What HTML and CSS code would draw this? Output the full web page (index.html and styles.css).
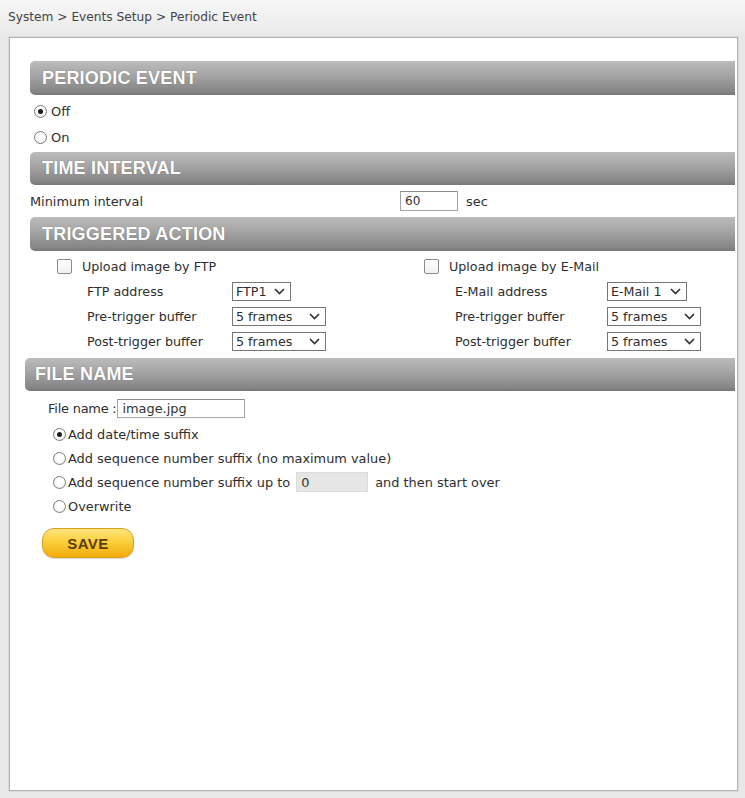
FILE: index.html
```html
<!DOCTYPE html>
<html>
<head>
<meta charset="utf-8">
<title>Periodic Event</title>
<link rel="stylesheet" href="styles.css">
</head>
<body>
<div class="topbar">System &gt; Events Setup &gt; Periodic Event</div>
<div class="panel">
  <div class="bar">PERIODIC EVENT</div>
  <div class="opts">
    <div class="opt"><span class="radio radio-on"></span>Off</div>
    <div class="opt"><span class="radio"></span>On</div>
  </div>

  <div class="bar bar-short">TIME INTERVAL</div>
  <div class="interval">
    <span class="interval-label">Minimum interval</span>
    <span class="field field-num">60</span>
    <span class="unit">sec</span>
  </div>

  <div class="bar">TRIGGERED ACTION</div>
  <div class="actions">
    <div class="action">
      <div class="check-row"><span class="check"></span>Upload image by FTP</div>
      <div class="sub"><span class="sub-label">FTP address</span><span class="select select-ftp">FTP1<svg class="chev" viewBox="0 0 11 7"><polyline points="1,1 5.5,5.5 10,1"/></svg></span></div>
      <div class="sub"><span class="sub-label">Pre-trigger buffer</span><span class="select select-frames">5 frames<svg class="chev" viewBox="0 0 11 7"><polyline points="1,1 5.5,5.5 10,1"/></svg></span></div>
      <div class="sub"><span class="sub-label">Post-trigger buffer</span><span class="select select-frames">5 frames<svg class="chev" viewBox="0 0 11 7"><polyline points="1,1 5.5,5.5 10,1"/></svg></span></div>
    </div>
    <div class="action action-mail">
      <div class="check-row"><span class="check"></span>Upload image by E-Mail</div>
      <div class="sub"><span class="sub-label">E-Mail address</span><span class="select select-mail">E-Mail 1<svg class="chev" viewBox="0 0 11 7"><polyline points="1,1 5.5,5.5 10,1"/></svg></span></div>
      <div class="sub"><span class="sub-label">Pre-trigger buffer</span><span class="select select-frames">5 frames<svg class="chev" viewBox="0 0 11 7"><polyline points="1,1 5.5,5.5 10,1"/></svg></span></div>
      <div class="sub"><span class="sub-label">Post-trigger buffer</span><span class="select select-frames">5 frames<svg class="chev" viewBox="0 0 11 7"><polyline points="1,1 5.5,5.5 10,1"/></svg></span></div>
    </div>
  </div>

  <div class="bar bar-file">FILE NAME</div>
  <div class="file">
    <div class="file-row">File name :<span class="field field-name">image.jpg</span></div>
    <div class="suffixes">
      <div class="suffix"><span class="radio radio-on"></span>Add date/time suffix</div>
      <div class="suffix"><span class="radio"></span>Add sequence number suffix (no maximum value)</div>
      <div class="suffix"><span class="radio"></span>Add sequence number suffix up to<span class="field field-seq">0</span>and then start over</div>
      <div class="suffix"><span class="radio"></span>Overwrite</div>
    </div>
    <button class="save">SAVE</button>
  </div>
</div>
</body>
</html>
```

FILE: styles.css
```css
* { box-sizing: border-box; }

html, body {
  margin: 0;
  height: 798px;
  overflow: hidden;
}

body {
  background: #e8e8e8;
  font-family: "DejaVu Sans", Verdana, sans-serif;
  color: #2e2e2e;
}

.topbar {
  height: 37px;
  padding: 10px 0 0 8px;
  background: linear-gradient(#f7f7f7, #e9e9e9);
  font-size: 12.2px;
  color: #444;
}

.panel {
  margin: 0 7px 0 9px;
  height: 754px;
  background: #fff;
  border: 1px solid #b3b3b3;
  box-shadow: 0 0 0 1px #d9d9d9;
  padding: 23px 2px 0 20px;
}

.bar {
  height: 34px;
  display: flex;
  align-items: center;
  padding-left: 12px;
  border-radius: 5px 0 0 5px;
  background: linear-gradient(#bcbcbc 0%, #a3a3a3 45%, #858585 90%, #777 100%);
  color: #fff;
  font-family: "Liberation Sans", Arial, sans-serif;
  font-weight: bold;
  font-size: 18px;
  letter-spacing: 0.2px;
  text-shadow: 0 0 1px rgba(0, 0, 0, 0.35);
}

.bar-short { height: 33px; }

.bar-file {
  height: 33px;
  margin-left: -5px;
  padding-left: 10px;
}

/* radios & checks */
.radio {
  width: 13px;
  height: 13px;
  flex: none;
  border: 1px solid #7c7c7c;
  border-radius: 50%;
  background: radial-gradient(circle at 50% 40%, #fff 40%, #e6e6e6 100%);
  display: inline-flex;
  align-items: center;
  justify-content: center;
}

.radio-on::after {
  content: "";
  width: 5px;
  height: 5px;
  border-radius: 50%;
  background: #1c1c1c;
}

.check {
  width: 15px;
  height: 15px;
  flex: none;
  border: 1px solid #8a8a8a;
  border-radius: 2px;
  background: linear-gradient(#fff, #f1f1f1);
}

/* periodic event */
.opts {
  padding: 3px 0 2px 4px;
}

.opt {
  height: 26px;
  display: flex;
  align-items: center;
  gap: 4px;
  font-size: 13px;
}

/* time interval */
.interval {
  height: 32px;
  display: flex;
  align-items: center;
  font-size: 12.9px;
}

.interval-label { width: 370px; }

.field {
  display: inline-flex;
  align-items: center;
  flex: none;
  padding-left: 4px;
  border: 1px solid #a4a4a4;
  border-top-color: #8c8c8c;
  background: #fff;
  color: #333;
}

.field-num {
  width: 58px;
  height: 20px;
  font-size: 12px;
}

.unit { margin-left: 8px; }

/* triggered action */
.actions {
  display: flex;
  padding: 3px 0 4px 27px;
  font-size: 12.7px;
}

.action {
  width: 367px;
  flex: none;
}

.action-mail { width: 300px; }

.check-row {
  height: 25px;
  display: flex;
  align-items: center;
  gap: 10px;
}

.sub {
  height: 25px;
  display: flex;
  align-items: center;
  padding-left: 30px;
}

.sub-label { width: 145px; flex: none; }

.action-mail .sub { padding-left: 31px; }
.action-mail .sub-label { width: 152px; }

.select {
  height: 19px;
  flex: none;
  display: inline-flex;
  align-items: center;
  justify-content: space-between;
  padding: 0 5px 0 3px;
  border: 1px solid #767676;
  background: #fff;
}

.select-ftp { width: 59px; }
.select-frames { width: 94px; }
.select-mail { width: 80px; }

.chev {
  width: 11px;
  height: 7px;
  fill: none;
  stroke: #333;
  stroke-width: 1.7;
}

/* file name */
.file {
  font-size: 12.9px;
}

.file-row {
  margin-top: 5px;
  height: 24px;
  display: flex;
  align-items: center;
  gap: 1px;
  padding-left: 18px;
  letter-spacing: -0.2px;
}

.field-name {
  width: 128px;
  height: 19px;
  letter-spacing: 0;
}

.suffixes {
  margin-top: 2px;
  padding-left: 23px;
}

.suffix {
  height: 24px;
  display: flex;
  align-items: center;
  gap: 2px;
}

.field-seq {
  width: 72px;
  height: 20px;
  margin: 0 5px 0 4px;
  border: 1px solid #dcdcdc;
  background: #e6e6e6;
}

.save {
  display: block;
  margin: 10px 0 0 12px;
  width: 92px;
  height: 30px;
  border: 1px solid #d9a01c;
  border-radius: 12px;
  background: linear-gradient(#ffe47e 0%, #fbcf3c 45%, #f1ab0a 100%);
  box-shadow: 0 1px 1px rgba(0, 0, 0, 0.15);
  font-family: "Liberation Sans", Arial, sans-serif;
  font-weight: bold;
  font-size: 15px;
  letter-spacing: 0.5px;
  color: #5b3c0e;
  padding: 0;
}
```
